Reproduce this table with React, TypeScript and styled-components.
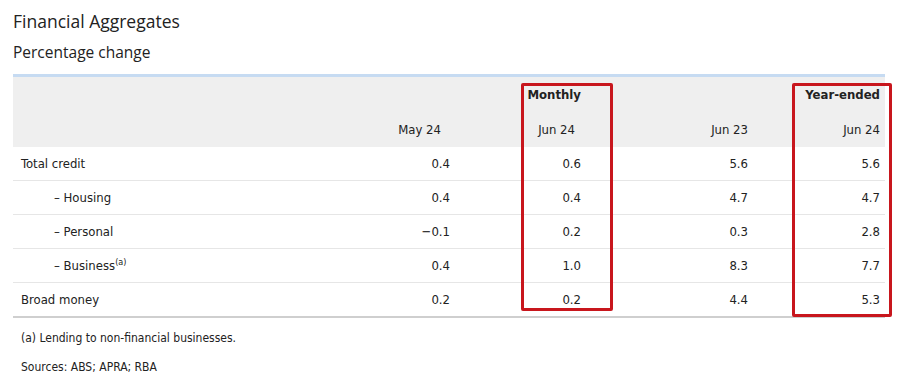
import React from "react";
import styled, { createGlobalStyle } from "styled-components";

const GlobalStyle = createGlobalStyle`
  html, body {
    margin: 0;
    padding: 0;
    background: #ffffff;
  }
  body {
    font-family: "DejaVu Sans Condensed", "DejaVu Sans", sans-serif;
    color: #222222;
  }
`;

const Page = styled.div`
  width: 900px;
  height: 381px;
  box-sizing: border-box;
  padding: 9px 0 0 13px;
  overflow: hidden;
`;

const Title = styled.h1`
  margin: 0;
  font-family: "Open Sans", sans-serif;
  font-weight: 400;
  font-size: 17.5px;
  line-height: 24px;
  color: #222;
`;

const Subtitle = styled.h2`
  margin: 9px 0 0;
  font-family: "Open Sans", sans-serif;
  font-weight: 400;
  font-size: 15.5px;
  line-height: 20px;
  color: #222;
`;

const TableWrap = styled.div`
  position: relative;
  width: 872px;
  margin-top: 12px;
`;

const Table = styled.table`
  width: 100%;
  border-collapse: collapse;
  table-layout: fixed;
  font-size: 13px;
  border-top: 3px solid #c6dbf2;
  border-bottom: 2px solid #cfcfcf;
`;

const Head = styled.thead`
  background: #efefef;
`;

const HeadCell = styled.th<{ $bold?: boolean; $inset?: number }>`
  height: 35px;
  padding: 0 ${({ $inset }) => 5 + ($inset ?? 0)}px 0 0;
  text-align: right;
  font-weight: ${({ $bold }) => ($bold ? 700 : 400)};
  vertical-align: middle;
`;

const Row = styled.tr`
  & + & td {
    border-top: 1px solid #e6e6e6;
  }
`;

const LabelCell = styled.td<{ $sub?: boolean }>`
  height: 33px;
  padding: 0 0 0 ${({ $sub }) => ($sub ? 41 : 8)}px;
  text-align: left;
`;

const NumCell = styled.td`
  height: 33px;
  padding: 0 5px 0 0;
  text-align: right;
`;

const Note = styled.sup`
  font-size: 9px;
  vertical-align: 5px;
  line-height: 0;
`;

const Highlight = styled.div<{ $left: number; $width: number; $height: number }>`
  position: absolute;
  top: 9px;
  left: ${({ $left }) => $left}px;
  width: ${({ $width }) => $width}px;
  height: ${({ $height }) => $height}px;
  box-sizing: border-box;
  border: 3px solid #c8161d;
  border-radius: 2px;
  pointer-events: none;
`;

const Footnotes = styled.div`
  padding: 6px 0 0 8px;
  font-size: 12px;
  line-height: 29px;
  color: #222;
`;

type Item = { label: string; sub?: boolean; note?: string; values: string[] };

const rows: Item[] = [
  { label: "Total credit", values: ["0.4", "0.6", "5.6", "5.6"] },
  { label: "– Housing", sub: true, values: ["0.4", "0.4", "4.7", "4.7"] },
  { label: "– Personal", sub: true, values: ["−0.1", "0.2", "0.3", "2.8"] },
  { label: "– Business", sub: true, note: "(a)", values: ["0.4", "1.0", "8.3", "7.7"] },
  { label: "Broad money", values: ["0.2", "0.2", "4.4", "5.3"] },
];

export default function App() {
  return (
    <>
      <GlobalStyle />
      <Page>
        <Title>Financial Aggregates</Title>
        <Subtitle>Percentage change</Subtitle>
        <TableWrap>
          <Table>
            <colgroup>
              <col style={{ width: 317 }} />
              <col style={{ width: 125 }} />
              <col style={{ width: 131 }} />
              <col style={{ width: 167 }} />
              <col style={{ width: 132 }} />
            </colgroup>
            <Head>
              <tr>
                <HeadCell />
                <HeadCell />
                <HeadCell $bold>Monthly</HeadCell>
                <HeadCell />
                <HeadCell $bold>Year-ended</HeadCell>
              </tr>
              <tr>
                <HeadCell />
                <HeadCell $inset={9}>May 24</HeadCell>
                <HeadCell $inset={6}>Jun 24</HeadCell>
                <HeadCell>Jun 23</HeadCell>
                <HeadCell>Jun 24</HeadCell>
              </tr>
            </Head>
            <tbody>
              {rows.map((r) => (
                <Row key={r.label}>
                  <LabelCell $sub={r.sub}>
                    {r.label}
                    {r.note && <Note>{r.note}</Note>}
                  </LabelCell>
                  {r.values.map((v, i) => (
                    <NumCell key={i}>{v}</NumCell>
                  ))}
                </Row>
              ))}
            </tbody>
          </Table>
          <Highlight $left={508} $width={92} $height={228} />
          <Highlight $left={779} $width={100} $height={234} />
        </TableWrap>
        <Footnotes>
          <div>(a) Lending to non-financial businesses.</div>
          <div>Sources: ABS; APRA; RBA</div>
        </Footnotes>
      </Page>
    </>
  );
}
